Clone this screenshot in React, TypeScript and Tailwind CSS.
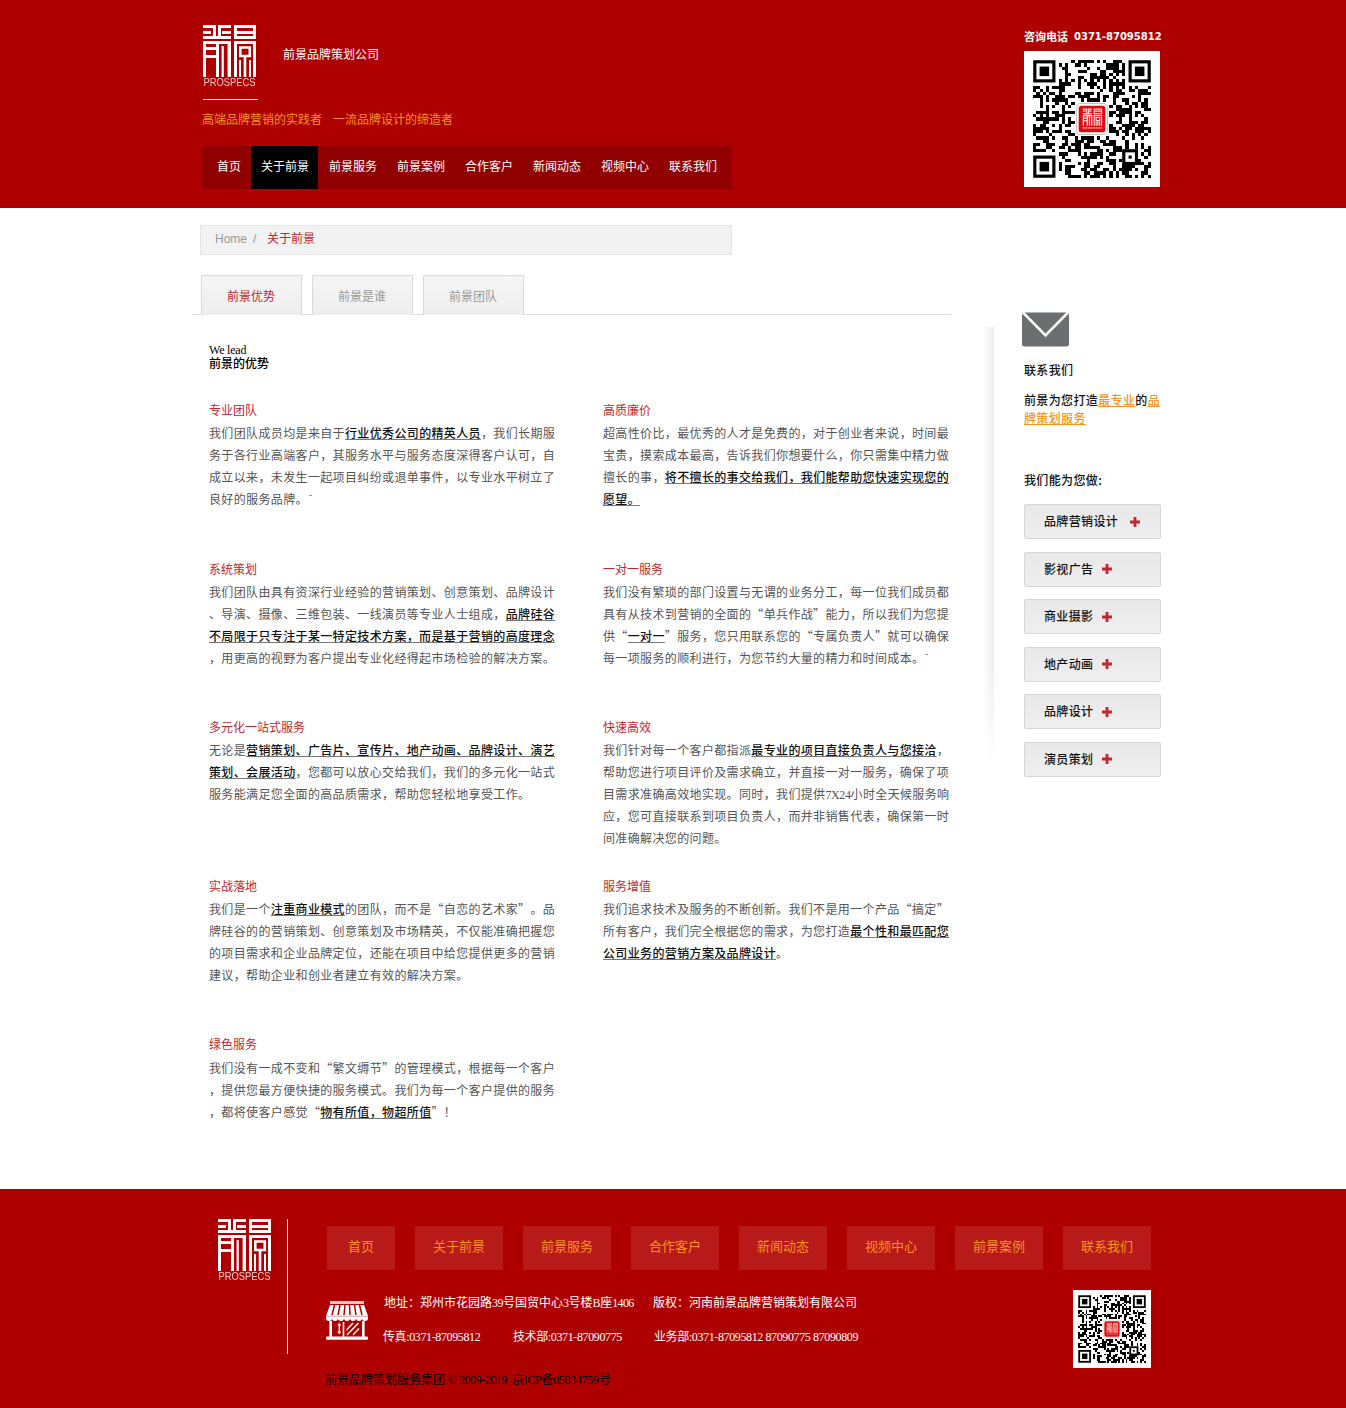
import React from "react";

const CJK = "font-['Noto_Sans_CJK_SC',sans-serif]";
const SERIF = "font-['Liberation_Serif','Noto_Sans_CJK_SC',serif]";

function Logo() {
  return (
    <svg width="54" height="64" viewBox="0 0 54 64" className="-mb-0.5 block shrink-0">
      <g fill="none" stroke="#fff" strokeWidth="3">
        <path d="M0 1.5H11.5V12M0 7.5H8M28 1.5H16.5V12M19 7.5H28" />
        <path d="M0 12.5H28" />
        <path d="M0 17.5H28" />
        <path d="M1.5 17V52M14.5 17V52M2 23.5H13M2 31.5H13" />
        <path d="M26.3 17V52" strokeWidth="3.4" />
        <path d="M19.7 21V52" strokeWidth="2.2" />
        <path d="M32.5 13V1.5H51.5V13M34 7.5H51" />
        <path d="M31 12.5H53" />
        <path d="M31 17.5H53" />
        <path d="M32.5 17V52M51.5 17V52" />
        <path d="M37.3 22.5H46.8V31H37.3zM42 31V52" strokeWidth="2.6" />
        <path d="M37 35V52M47 35V52" strokeWidth="2" />
      </g>
      <text x="0.5" y="61" fill="#fff" fontSize="10" textLength="52" lengthAdjust="spacingAndGlyphs" fontFamily="Liberation Sans" opacity="0.8">
        PROSPECS
      </text>
    </svg>
  );
}

const QR_SIZE = 37;

function buildModules() {
  const cells: [number, number][] = [];
  let seed = 20190371;
  for (let y = 0; y < QR_SIZE; y++) {
    for (let x = 0; x < QR_SIZE; x++) {
      seed = (Math.imul(seed, 1664525) + 1013904223) >>> 0;
      const on = seed / 4294967296 < 0.5;
      const finder = (x < 8 && y < 8) || (x > 28 && y < 8) || (x < 8 && y > 28);
      const align = x >= 28 && x <= 32 && y >= 28 && y <= 32;
      const centre = x > 12 && x < 24 && y > 12 && y < 24;
      if (finder || align || centre) continue;
      if (x === 6 || y === 6 ? (x + y) % 2 === 0 : on) cells.push([x, y]);
    }
  }
  return cells;
}

const MODULE_PATH = buildModules()
  .map(([x, y]) => `M${x} ${y}h1v1h-1z`)
  .join("");

function QrCode({ className }: { className: string }) {
  return (
    <svg viewBox="-2.9 -2.9 42.8 42.8" className={className}>
      <rect x="-3" y="-3" width="43" height="43" fill="#fff" />
      <path d={MODULE_PATH} fill="#000" shapeRendering="crispEdges" />
      {[[0, 0], [30, 0], [0, 30]].map(([x, y]) => (
        <g key={`${x}-${y}`}>
          <rect x={x + 0.5} y={y + 0.5} width="6" height="6" fill="none" stroke="#000" />
          <rect x={x + 2} y={y + 2} width="3" height="3" />
        </g>
      ))}
      <rect x="28.5" y="28.5" width="4" height="4" fill="none" stroke="#000" />
      <rect x="30" y="30" width="1" height="1" />
      <rect x="13.6" y="13.6" width="9.8" height="9.8" rx="1.3" fill="#fff" stroke="#bbb" strokeWidth="0.3" />
      <rect x="14.3" y="14.3" width="8.4" height="8.4" rx="0.9" fill="#dc0c10" />
      <g fill="none" stroke="#fbd5d0" strokeWidth="0.35">
        <path d="M15.6 15.4h1.2v1.2M15.6 16h.9M18.4 15.4h-1v1.2M17.6 16h.8M15.6 16.8h2.8M15.6 17.4h2.8M15.8 17.2v3.4M17 17.2v3.4M15.8 18.2h1.2M15.8 19h1.2M17.7 17.6v3M18.4 17.2v3.4" strokeWidth="0.42" />
        <path d="M19.2 16.8v-1.4h2.3v1.4M19.2 16h2.3M19 16.8h2.7M19 17.4h2.7M19.2 17.2v3.4M21.5 17.2v3.4M19.8 18h1.1v1h-1.1zM20.35 19v1.6M19.8 19.4v1.2M20.9 19.4v1.2" strokeWidth="0.38" />
        <path d="M15.6 21.3h6.1" strokeDasharray="0.6 0.2" />
      </g>
    </svg>
  );
}

function Store() {
  return (
    <svg width="42" height="39" viewBox="0 0 42 39" className="block shrink-0">
      <rect x="4" y="0" width="34" height="3" fill="#efc9c9" />
      <path d="M4 4H38L42 15V17a3 3 0 0 1-6 0a3 3 0 0 1-6 0a3 3 0 0 1-6 0a3 3 0 0 1-6 0a3 3 0 0 1-6 0a3 3 0 0 1-6 0a3 3 0 0 1-6 0V15z" fill="#fff" />
      <path d="M8.5 4L6 14M14 4L12 14M19 4L18 14M23.5 4L24 14M28.5 4L30 14M33.5 4L36 14" stroke="#ae0000" strokeWidth="1.5" />
      <path d="M0 15.2H42" stroke="#d98080" strokeWidth="0.8" />
      <path d="M4.7 20V36M37.3 20V36" stroke="#fff" strokeWidth="2.6" />
      <path d="M17.5 21V36" stroke="#fff" strokeWidth="1.6" />
      <path d="M13.3 22V33M11.8 24h3M11.8 31h3M20.5 29L27 22M21 34L32.5 22M27 34L33 27.5" stroke="#fff" strokeWidth="1.4" />
      <rect y="35.5" width="42" height="3.2" rx="1" fill="#fff" />
    </svg>
  );
}

const NAV = ["首页", "关于前景", "前景服务", "前景案例", "合作客户", "新闻动态", "视频中心", "联系我们"];
const FOOT_NAV = ["首页", "关于前景", "前景服务", "合作客户", "新闻动态", "视频中心", "前景案例", "联系我们"];
const TABS = ["前景优势", "前景是谁", "前景团队"];
const SERVICES = ["品牌营销设计", "影视广告", "商业摄影", "地产动画", "品牌设计", "演员策划"];

// Square brackets mark emphasised runs; "~" marks the trailing tick.
const SECTIONS: { title: string; lines: string[] }[] = [
  {
    title: "专业团队",
    lines: [
      "我们团队成员均是来自于[行业优秀公司的精英人员]，我们长期服",
      "务于各行业高端客户，其服务水平与服务态度深得客户认可，自",
      "成立以来，未发生一起项目纠纷或退单事件，以专业水平树立了",
      "良好的服务品牌。~",
    ],
  },
  {
    title: "高质廉价",
    lines: [
      "超高性价比，最优秀的人才是免费的，对于创业者来说，时间最",
      "宝贵，摸索成本最高，告诉我们你想要什么，你只需集中精力做",
      "擅长的事，[将不擅长的事交给我们，我们能帮助您快速实现您的]",
      "[愿望。]",
    ],
  },
  {
    title: "系统策划",
    lines: [
      "我们团队由具有资深行业经验的营销策划、创意策划、品牌设计",
      "、导演、摄像、三维包装、一线演员等专业人士组成，[品牌硅谷]",
      "[不局限于只专注于某一特定技术方案，而是基于营销的高度理念]",
      "，用更高的视野为客户提出专业化经得起市场检验的解决方案。",
    ],
  },
  {
    title: "一对一服务",
    lines: [
      "我们没有繁琐的部门设置与无谓的业务分工，每一位我们成员都",
      "具有从技术到营销的全面的“单兵作战”能力，所以我们为您提",
      "供“[一对一]”服务，您只用联系您的“专属负责人”就可以确保",
      "每一项服务的顺利进行，为您节约大量的精力和时间成本。~",
    ],
  },
  {
    title: "多元化一站式服务",
    lines: [
      "无论是[营销策划、广告片、宣传片、地产动画、品牌设计、演艺]",
      "[策划、会展活动]，您都可以放心交给我们，我们的多元化一站式",
      "服务能满足您全面的高品质需求，帮助您轻松地享受工作。",
    ],
  },
  {
    title: "快速高效",
    lines: [
      "我们针对每一个客户都指派[最专业的项目直接负责人与您接洽]，",
      "帮助您进行项目评价及需求确立，并直接一对一服务，确保了项",
      "目需求准确高效地实现。同时，我们提供7X24小时全天候服务响",
      "应，您可直接联系到项目负责人，而并非销售代表，确保第一时",
      "间准确解决您的问题。",
    ],
  },
  {
    title: "实战落地",
    lines: [
      "我们是一个[注重商业模式]的团队，而不是“自恋的艺术家”。品",
      "牌硅谷的的营销策划、创意策划及市场精英，不仅能准确把握您",
      "的项目需求和企业品牌定位，还能在项目中给您提供更多的营销",
      "建议，帮助企业和创业者建立有效的解决方案。",
    ],
  },
  {
    title: "服务增值",
    lines: [
      "我们追求技术及服务的不断创新。我们不是用一个产品“搞定”",
      "所有客户，我们完全根据您的需求，为您打造[最个性和最匹配您]",
      "[公司业务的营销方案及品牌设计]。",
    ],
  },
  {
    title: "绿色服务",
    lines: [
      "我们没有一成不变和“繁文缛节”的管理模式，根据每一个客户",
      "，提供您最方便快捷的服务模式。我们为每一个客户提供的服务",
      "，都将使客户感觉“[物有所值，物超所值]”！",
    ],
  },
];

function RichLine({ text }: { text: string }) {
  return (
    <div className="h-[22px]">
      {text.split(/(\[[^\]]+\]|~|7X24)/).map((part, i) => {
        if (part.startsWith("["))
          return (
            <b key={i} className="font-medium text-[#111] underline decoration-[#777] decoration-1 underline-offset-1">
              {part.slice(1, -1)}
            </b>
          );
        if (part === "~") return <i key={i} className="ml-px inline-block h-px w-[3px] -translate-y-2 bg-[#999]" />;
        if (part === "7X24")
          return (
            <span key={i} className="font-['Liberation_Serif'] tracking-[-0.4px]">
              {part}
            </span>
          );
        return <React.Fragment key={i}>{part}</React.Fragment>;
      })}
    </div>
  );
}

function Header() {
  return (
    <header className="h-52 bg-[#ae0000]">
      <div className="flex pl-[202px] text-white">
        <div className="w-[530px] pt-[25px]">
          <div className="flex h-[62px] pl-px">
            <Logo />
            <h1 className="ml-[26px] mt-5 text-xs leading-[18px]">前景品牌策划公司</h1>
          </div>
          <div className="ml-px mt-3 h-px w-[55px] bg-white" />
          <p className="mt-2.5 flex gap-[11px] text-xs leading-[18px] text-[#f7931e]">
            <span>高端品牌营销的实践者</span>
            <span>一流品牌设计的缔造者</span>
          </p>
          <nav className="mt-[18px] flex h-[43px] bg-[#900000] px-[5px] text-xs leading-[39px]">
            {NAV.map((n, i) => (
              <a key={n} className={i === 1 ? "mr-px w-[67px] bg-black pl-2.5" : "px-2.5"}>
                {n}
              </a>
            ))}
          </nav>
        </div>
        <div className="ml-[292px] pt-[27px]">
          <p className="flex h-[18px] items-center whitespace-nowrap font-bold">
            <span className="w-[50px] text-[11px]">咨询电话</span>
            <span className="font-['DejaVu_Sans'] text-[10px]">0371-87095812</span>
          </p>
          <QrCode className="mt-1.5 block size-[136px]" />
        </div>
      </div>
    </header>
  );
}

function Sidebar() {
  return (
    <aside className="flex">
      <div className="ml-8 mt-[119px] h-[440px] w-[11px] bg-linear-to-r from-white to-[#ececec] mask-b-from-75%" />
      <div className="ml-[30px] pt-[104px] text-xs font-medium tracking-[0.36px] text-[#111]">
        <svg width="47" height="35" viewBox="0 0 47 35" className="-ml-0.5 block">
          <rect y="0.5" width="47" height="34" rx="2.5" fill="#6d6e70" />
          <path d="M1 0.5L23.5 23.5L46 0.5" fill="none" stroke="#fff" strokeWidth="2.6" />
        </svg>
        <p className="mt-3.5 leading-[18px]">联系我们</p>
        <p className="mt-3 w-[140px] leading-[18px]">
          前景为您打造<span className="text-[#f7931e] underline underline-offset-1">最专业</span>的
          <span className="text-[#f7931e] underline underline-offset-1">品</span>
          <br />
          <span className="text-[#f7931e] underline underline-offset-1">牌策划服务</span>
        </p>
        <p className="mt-11 leading-[18px]">我们能为您做:</p>
        <ul className="mt-[15px] flex flex-col gap-[12.6px]">
          {SERVICES.map((s, i) => (
            <li
              key={s}
              className="flex h-[35px] w-[137px] items-center rounded-[2px] border border-[#d6d6d6] bg-linear-to-b from-[#e8e8e8] to-[#efefef] pl-[19px]"
            >
              <span className="pb-px">{s}</span>
              <svg width="10" height="10" className={i === 0 ? "ml-3" : "ml-[8.6px]"}>
                <path d="M5 0V10M0 5H10" stroke="#c1272d" strokeWidth="2.8" />
              </svg>
            </li>
          ))}
        </ul>
      </div>
    </aside>
  );
}

function Main() {
  return (
    <main className="flex h-[981px] pl-48">
      <div className="w-[759px] pt-[17px]">
        <div className="ml-2 flex h-[30px] w-[532px] items-center border border-[#e4e4e4] bg-[#f2f2f2] pb-0.5 pl-3.5 text-xs text-[#999]">
          <span className="w-[38px] font-['Liberation_Sans']">Home</span>
          <span className="w-3.5 font-['Liberation_Sans']">/</span>
          <span className="pb-0.5 text-[#c1272d]">关于前景</span>
        </div>
        <div className="mt-5 flex h-10 gap-2.5 border-b border-[#dcdcdc] pl-[9px]">
          {TABS.map((t, i) => (
            <a
              key={t}
              className={`h-10 w-[101px] rounded-t-[2px] border border-b-0 border-[#d9d9d9] bg-linear-to-b from-[#f5f5f5] to-[#eeeeee] pl-[25px] text-xs leading-[39px] ${i === 0 ? "text-[#c1272d]" : "text-[#999]"}`}
            >
              {t}
            </a>
          ))}
        </div>
        <div className="ml-[17px] mt-[29px] text-xs leading-[13px] text-black">
          <p className="font-['Liberation_Serif'] tracking-[-0.2px]">We lead</p>
          <p className="font-medium leading-[12px]">前景的优势</p>
        </div>
        <div className="ml-[17px] mt-[30px] grid auto-rows-[158.5px] grid-cols-[394px_348px] whitespace-nowrap text-xs leading-[22px]">
          {SECTIONS.map((s, i) => (
            <section key={s.title}>
              <h2 className="text-[#c1272d]">{s.title}</h2>
              <div className={`tracking-[0.36px] text-[#555] ${i === 8 ? "mt-0.5" : "mt-px"}`}>
                {s.lines.map((l) => (
                  <RichLine key={l} text={l} />
                ))}
              </div>
            </section>
          ))}
        </div>
      </div>
      <Sidebar />
    </main>
  );
}

function Footer() {
  return (
    <footer className="flex h-[219px] bg-[#ae0000] pl-[218px] pt-[30px]">
      <Logo />
      <div className="ml-[15px] h-[135px] w-px bg-white" />
      <div className="ml-[37px] w-[826px] pt-[7px]">
        <nav className="ml-0.5 flex gap-5 text-[13px] leading-[40px] text-[#f7931e]">
          {FOOT_NAV.map((n, i) => (
            <a key={n} className={`h-11 bg-[#b81a1a] text-center ${i === 0 ? "w-[68px]" : "w-[88px]"}`}>
              {n}
            </a>
          ))}
        </nav>
        <div className={`mt-5 flex whitespace-nowrap text-xs leading-[18px] ${SERIF}`}>
          <div className="flex h-[70px] w-[748px] text-white">
            <div className="ml-px mt-[11px]">
              <Store />
            </div>
            <div className="ml-[15px] pt-1">
              <p className="flex">
                <span className="ml-px w-[269px]">
                  地址：郑州市花园路<i className="not-italic tracking-[-0.5px]">39</i>号国贸中心
                  <i className="not-italic tracking-[-0.5px]">3</i>号楼<i className="not-italic tracking-[-0.4px]">B</i>座
                  <i className="not-italic tracking-[-0.6px]">1406</i>
                </span>
                <span>版权：河南前景品牌营销策划有限公司</span>
              </p>
              <p className="mt-4 flex tracking-[-0.38px]">
                <span className="w-[130px]">传真:0371-87095812</span>
                <span className="w-[141px]">技术部:0371-87090775</span>
                <span>业务部:0371-87095812 87090775 87090809</span>
              </p>
            </div>
          </div>
          <QrCode className="block size-[78px]" />
        </div>
        <p className={`mt-[3px] flex whitespace-nowrap text-xs leading-[18px] text-black ${SERIF}`}>
          <span className="w-[123px]">前景品牌策划服务集团</span>
          <span className="w-16 tracking-[-0.45px]">© 2009-2019</span>
          <span className="tracking-[-0.3px]">京ICP备05034759号</span>
        </p>
      </div>
    </footer>
  );
}

export default function App() {
  return (
    <div lang="zh-CN" className={`w-[1346px] overflow-hidden bg-white [text-spacing-trim:space-all] ${CJK}`}>
      <Header />
      <Main />
      <Footer />
    </div>
  );
}
